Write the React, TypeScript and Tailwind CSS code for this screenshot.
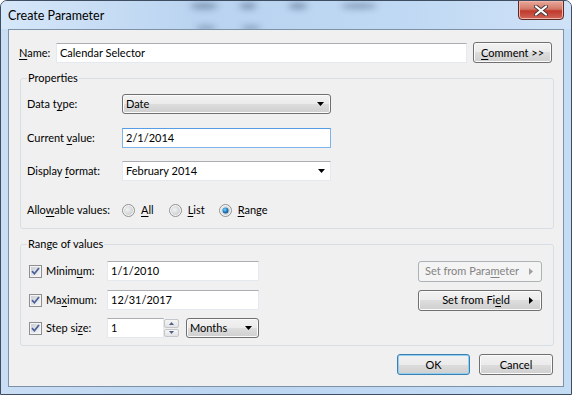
import type { ReactNode } from 'react';
import clsx from 'clsx';

function Ul({ children }: { children: ReactNode }) {
  return <span className="underline underline-offset-[2px] decoration-1">{children}</span>;
}

function DownArrow({ color = '#000' }: { color?: string }) {
  return (
    <svg width="7" height="4" viewBox="0 0 7 4">
      <path d="M0 0H7L3.5 4Z" fill={color} />
    </svg>
  );
}

function RightArrow({ color = '#000' }: { color?: string }) {
  return (
    <svg width="4" height="7" viewBox="0 0 4 7">
      <path d="M0 0V7L4 3.5Z" fill={color} />
    </svg>
  );
}

function TextBox({ value, className, focused }: { value: string; className?: string; focused?: boolean }) {
  return (
    <div
      className={clsx(
        'h-[20px] bg-white border flex items-center px-[3px]',
        focused ? 'border-[#7eb4ea] border-t-[#569de5]' : 'border-[#e3e9ef] border-t-[#abadb3]',
        className,
      )}
    >
      {value}
    </div>
  );
}

function ButtonSelect({ value, className }: { value: string; className?: string }) {
  return (
    <div
      className={clsx(
        'h-[20px] rounded-[3px] border border-[#707070] flex items-center pl-[3px] pr-[6px] bg-[linear-gradient(#f2f2f2,#ebebeb_50%,#dddddd_50%,#cfcfcf)] shadow-[inset_0_0_0_1px_#fbfbfb]',
        className,
      )}
    >
      <span className="flex-1">{value}</span>
      <DownArrow />
    </div>
  );
}

function WinButton({
  children,
  className,
  isDefault,
  disabled,
}: {
  children: ReactNode;
  className?: string;
  isDefault?: boolean;
  disabled?: boolean;
}) {
  return (
    <div
      className={clsx(
        'h-[21px] rounded-[3px] border flex items-center whitespace-nowrap',
        disabled
          ? 'border-[#adb2b5] bg-[#f4f4f4] text-[#838383]'
          : 'bg-[linear-gradient(#f2f2f2,#ebebeb_50%,#dddddd_50%,#cfcfcf)]',
        !disabled && (isDefault ? 'border-[#3c7fb1] shadow-[inset_0_0_0_1px_#8fd0f2]' : 'border-[#707070] shadow-[inset_0_0_0_1px_#fbfbfb]'),
        className,
      )}
    >
      {children}
    </div>
  );
}

function CheckBox() {
  return (
    <svg width="13" height="13" viewBox="0 0 13 13" className="shrink-0">
      <defs>
        <linearGradient id="cbg" x1="0" y1="0" x2="1" y2="1">
          <stop offset="0" stopColor="#cbcfd5" />
          <stop offset="1" stopColor="#f4f6f8" />
        </linearGradient>
      </defs>
      <rect x="0.5" y="0.5" width="12" height="12" fill="#f4f4f4" stroke="#8e8f8f" />
      <rect x="2" y="2" width="9" height="9" fill="url(#cbg)" />
      <path d="M3 6.2L5.4 8.8L10 3" fill="none" stroke="#4a5f97" strokeWidth="1.7" />
    </svg>
  );
}

function Radio({ checked }: { checked?: boolean }) {
  return (
    <svg width="13" height="13" viewBox="0 0 13 13" className="shrink-0">
      <defs>
        <radialGradient id="rbg" cx="0.4" cy="0.4" r="0.7">
          <stop offset="0" stopColor="#f2f2f2" />
          <stop offset="1" stopColor="#c9cccf" />
        </radialGradient>
        <radialGradient id="rdot" cx="0.4" cy="0.35" r="0.7">
          <stop offset="0" stopColor="#7bd0fb" />
          <stop offset="0.6" stopColor="#1f7cc0" />
          <stop offset="1" stopColor="#0d4d80" />
        </radialGradient>
      </defs>
      <circle cx="6.5" cy="6.5" r="6" fill="#f6f6f6" stroke="#8e8f8f" />
      <circle cx="6.5" cy="6.5" r="4.5" fill="url(#rbg)" />
      {checked && <circle cx="6.5" cy="6.5" r="3" fill="url(#rdot)" />}
    </svg>
  );
}

function Spin() {
  return (
    <div className="w-[15px] h-[20px] flex flex-col gap-[1px] py-[1px]">
      <div className="flex-1 rounded-[2px] border border-[#c3c6ca] bg-[linear-gradient(#f5f5f5,#e3e3e3)] flex items-center justify-center">
        <svg width="5" height="3" viewBox="0 0 5 3">
          <path d="M0 3H5L2.5 0Z" fill="#4d6185" />
        </svg>
      </div>
      <div className="flex-1 rounded-[2px] border border-[#c3c6ca] bg-[linear-gradient(#f5f5f5,#e3e3e3)] flex items-center justify-center">
        <svg width="5" height="3" viewBox="0 0 5 3">
          <path d="M0 0H5L2.5 3Z" fill="#4d6185" />
        </svg>
      </div>
    </div>
  );
}

function GlassBlur() {
  return (
    <svg className="absolute inset-0" width="570" height="28" viewBox="0 0 570 28">
      <defs>
        <filter id="blur" x="-50%" y="-200%" width="200%" height="500%">
          <feGaussianBlur stdDeviation="3" />
        </filter>
      </defs>
      <g filter="url(#blur)" fill="#4f6685" opacity="0.6">
        <ellipse cx="203" cy="5" rx="14" ry="3" />
        <ellipse cx="247" cy="5" rx="9" ry="3" />
        <ellipse cx="297" cy="5" rx="10" ry="3" />
        <ellipse cx="358" cy="5" rx="18" ry="2.5" />
        <ellipse cx="205" cy="27" rx="10" ry="2" />
        <ellipse cx="250" cy="27" rx="10" ry="2" />
      </g>
    </svg>
  );
}

export default function App() {
  return (
    <div className="w-[572px] h-[395px] font-['Lato',sans-serif] text-[11px] leading-[16px] text-black">
      <div className="w-full h-full flex flex-col border border-[#3f4d60] rounded-t-[7px] overflow-hidden bg-[linear-gradient(90deg,#c9def4,#bcd5f1_40%,#c5dcf5)]">
        {/* title bar */}
        <div className="relative h-[28px] flex items-start bg-[linear-gradient(90deg,#d6e7f9,#b9d3f0_35%,#bfd8f3_70%,#cfe2f7)]">
          <GlassBlur />
          <span className="relative pl-[7px] pt-[7px] text-[12.5px]">Create Parameter</span>
          <div className="flex-1" />
          <div className="relative mr-[7px] -mt-[1px] w-[46px] h-[20px] rounded-b-[4px] border border-[#5b2a24] bg-[linear-gradient(#e9a99b,#d27868_45%,#c0392b_55%,#d0665a)] flex items-center justify-center shadow-[inset_0_0_0_1px_#f0b4a8]">
            <svg width="14" height="11" viewBox="0 0 14 11">
              <path d="M2 1.5L12 9.5M12 1.5L2 9.5" stroke="#4b3b3b" strokeWidth="4" strokeLinecap="round" />
              <path d="M2 1.5L12 9.5M12 1.5L2 9.5" stroke="#ffffff" strokeWidth="2.2" strokeLinecap="round" />
            </svg>
          </div>
        </div>

        {/* client */}
        <div className="flex-1 px-[7px] pb-[7px] flex flex-col">
          <div className="flex-1 border border-[#7d91a8] bg-[#f0f0f0] flex flex-col">
            {/* name row */}
            <div className="flex items-center mt-[12px] pl-[10px] pr-[11px]">
              <span className="w-[37px]">
                <Ul>N</Ul>ame:
              </span>
              <TextBox value="Calendar Selector" className="w-[412px]" />
              <WinButton className="ml-[6px] w-[79px] justify-center">
                <span>
                  <Ul>C</Ul>omment &gt;&gt;
                </span>
              </WinButton>
            </div>

            {/* properties */}
            <fieldset className="mt-[7px] ml-[11px] mr-[9px] border border-[#d5dfe5] rounded-[3px] pl-[6px] pt-[8px] pb-[8px]">
              <legend className="ml-[0px] px-[1px] leading-[16px]">Properties</legend>
              <div className="flex items-center h-[20px]">
                <span className="w-[95px]">
                  Data t<Ul>y</Ul>pe:
                </span>
                <ButtonSelect value="Date" className="w-[209px]" />
              </div>
              <div className="flex items-center h-[20px] mt-[14px]">
                <span className="w-[95px]">
                  Current <Ul>v</Ul>alue:
                </span>
                <TextBox value="2/1/2014" focused className="w-[209px]" />
              </div>
              <div className="flex items-center h-[20px] mt-[13px]">
                <span className="w-[95px]">
                  Display <Ul>f</Ul>ormat:
                </span>
                <div className="w-[209px] h-[20px] bg-white border border-[#e3e9ef] border-t-[#abadb3] flex items-center pl-[3px] pr-[5px]">
                  <span className="flex-1">February 2014</span>
                  <DownArrow />
                </div>
              </div>
              <div className="flex items-center h-[20px] mt-[19px]">
                <span className="w-[95px]">
                  Allo<Ul>w</Ul>able values:
                </span>
                <Radio />
                <span className="ml-[6px]">
                  <Ul>A</Ul>ll
                </span>
                <span className="ml-[15px]">
                  <Radio />
                </span>
                <span className="ml-[6px]">
                  <Ul>L</Ul>ist
                </span>
                <span className="ml-[14px]">
                  <Radio checked />
                </span>
                <span className="ml-[6px]">
                  <Ul>R</Ul>ange
                </span>
              </div>
            </fieldset>

            {/* range of values */}
            <fieldset className="mt-[7px] ml-[11px] mr-[9px] border border-[#d5dfe5] rounded-[3px] pl-[8px] pr-[11px] pt-[9px] pb-[7px]">
              <legend className="ml-[-2px] px-[1px] leading-[16px]">Range of values</legend>
              <div className="flex items-center h-[20px]">
                <CheckBox />
                <span className="ml-[4px] w-[61px]">
                  Minim<Ul>u</Ul>m:
                </span>
                <TextBox value="1/1/2010" className="w-[152px]" />
                <div className="flex-1" />
                <WinButton disabled className="w-[124px] pl-[6px] pr-[8px]">
                  <span className="flex-1">
                    Set from Para<Ul>m</Ul>eter
                  </span>
                  <RightArrow color="#a0a0a0" />
                </WinButton>
              </div>
              <div className="flex items-center h-[20px] mt-[9px]">
                <CheckBox />
                <span className="ml-[4px] w-[61px]">
                  Ma<Ul>x</Ul>imum:
                </span>
                <TextBox value="12/31/2017" className="w-[152px]" />
                <div className="flex-1" />
                <WinButton className="w-[124px] pr-[8px]">
                  <span className="flex-1 text-center pl-[4px]">
                    Set from Fi<Ul>e</Ul>ld
                  </span>
                  <RightArrow />
                </WinButton>
              </div>
              <div className="flex items-center h-[20px] mt-[8px]">
                <CheckBox />
                <span className="ml-[4px] w-[61px]">
                  Step si<Ul>z</Ul>e:
                </span>
                <TextBox value="1" className="w-[57px]" />
                <Spin />
                <ButtonSelect value="Months" className="ml-[7px] w-[73px]" />
              </div>
            </fieldset>

            {/* buttons */}
            <div className="flex justify-end mt-[8px] mr-[10px] gap-[9px]">
              <WinButton isDefault className="w-[73px] justify-center">
                OK
              </WinButton>
              <WinButton className="w-[74px] justify-center">Cancel</WinButton>
            </div>
          </div>
        </div>
      </div>
    </div>
  );
}
